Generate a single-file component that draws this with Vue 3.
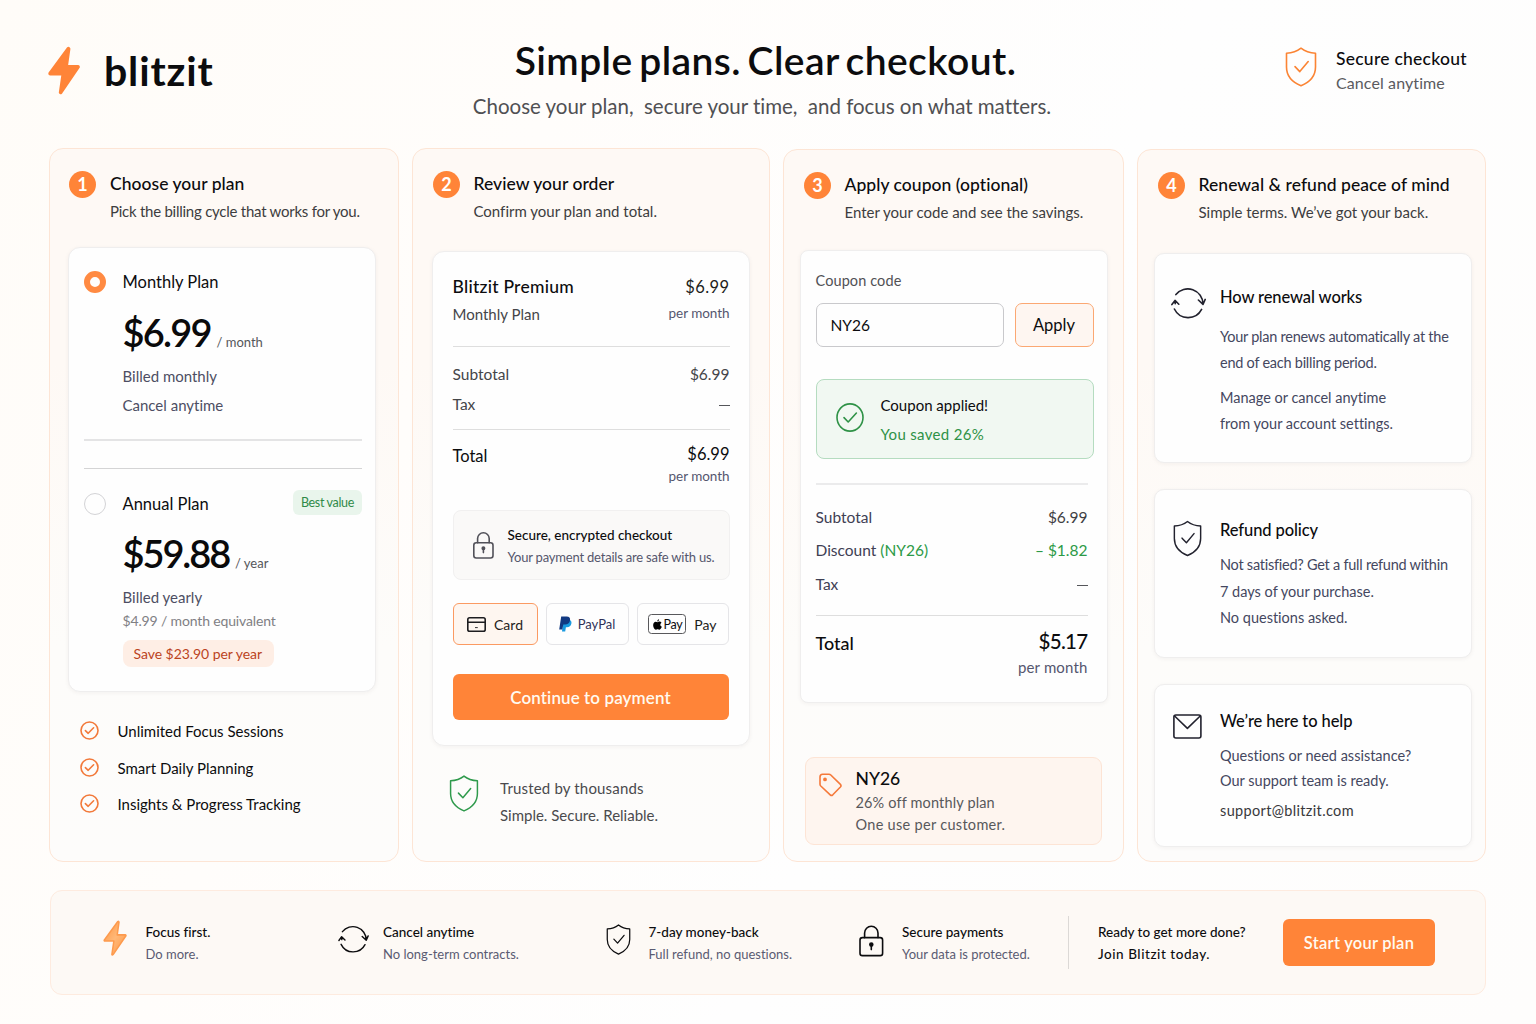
<script setup>

    import { ref, reactive } from 'vue';

    const planSeleccionado = ref('monthly');
    const metodoPago = ref('card');
    const cupon = ref('NY26');

    const beneficios = reactive([
        'Unlimited Focus Sessions',
        'Smart Daily Planning',
        'Insights & Progress Tracking'
    ]);

    // Trazos que se repiten en varios iconos
    const escudo = 'M16 1.2C12.2 4.2 7.2 6 1.5 6.3V20C1.5 29 7.8 35.4 16 38.8C24.2 35.4 30.5 29 30.5 20V6.3C24.8 6 19.8 4.2 16 1.2Z';
    const escudoCheck = 'M10 19.6L14.8 24.6L23.2 14.6';
    const rayo = 'M20.2 2L2.2 26.6Q1.8 27.8 3.2 27.9H15L12.4 45.6Q12.8 47 14 45.8L31 20.8Q31.2 19.8 30.2 19.7H19.4L21.8 2.8Q21.4 1.2 20.2 2Z';
    const flechas = 'M4.9 7.6A15.2 15.2 0 0 1 32 17M27.4 13L32 17.4L34.2 12.4M30.6 22.4A15.2 15.2 0 0 1 3.4 22M0.9 17.6L4 13.4L7.8 17.2M4 13.6L4.2 16.6';

</script>
<template>
    <div class="pagina">
        <header class="cabecera">
            <div class="logo">
                <svg class="logo__rayo" viewBox="0 0 33 49"><path :d="rayo" /></svg>
                <span>blitzit</span>
            </div>
            <div class="titulo">
                <h1>Simple plans. Clear checkout.</h1>
                <p>Choose your plan,&nbsp; secure your time,&nbsp; and focus on what matters.</p>
            </div>
            <div class="seguro">
                <svg class="linea" width="32" height="40" viewBox="0 0 32 40"><path :d="escudo" /><path :d="escudoCheck" /></svg>
                <div>
                    <strong>Secure checkout</strong>
                    <span>Cancel anytime</span>
                </div>
            </div>
        </header>

        <main class="pasos">
            <section class="paso paso--plan">
                <div class="paso__titulo">
                    <b>1</b>
                    <div>
                        <h2>Choose your plan</h2>
                        <p class="ajustado">Pick the billing cycle that works for you.</p>
                    </div>
                </div>
                <div class="tarjeta planes">
                    <div class="plan" @click="planSeleccionado = 'monthly'">
                        <i class="radio" :class="{ activo: planSeleccionado == 'monthly' }"></i>
                        <div>
                            <h3>Monthly Plan</h3>
                            <div class="precio"><strong>$6.99</strong> <span>/ month</span></div>
                            <p>Billed monthly</p>
                            <p class="plan__nota">Cancel anytime</p>
                        </div>
                    </div>
                    <hr class="grueso" />
                    <hr class="segundo" />
                    <div class="plan" @click="planSeleccionado = 'annual'">
                        <i class="radio" :class="{ activo: planSeleccionado == 'annual' }"></i>
                        <div>
                            <div class="plan__fila">
                                <h3>Annual Plan</h3>
                                <span class="mejor">Best value</span>
                            </div>
                            <div class="precio precio--anual"><strong>$59.88</strong> <span>/ year</span></div>
                            <p>Billed yearly</p>
                            <p class="equivalente">$4.99 / month equivalent</p>
                            <span class="ahorro">Save $23.90 per year</span>
                        </div>
                    </div>
                </div>
                <ul class="beneficios">
                    <li v-for="b in beneficios" :key="b">
                        <svg class="linea" width="19" height="19" viewBox="0 0 19 19"><circle cx="9.5" cy="9.5" r="8.5" /><path d="M5.4 9.6L8.2 12.3L13.6 6.8" /></svg>
                        {{ b }}
                    </li>
                </ul>
            </section>

            <section class="paso paso--orden">
                <div class="paso__titulo">
                    <b>2</b>
                    <div>
                        <h2>Review your order</h2>
                        <p>Confirm your plan and total.</p>
                    </div>
                </div>
                <div class="tarjeta orden">
                    <div class="fila fila--producto">
                        <div>
                            <h3>Blitzit Premium</h3>
                            <p>Monthly Plan</p>
                        </div>
                        <div class="derecha">
                            <span class="monto">$6.99</span>
                            <small>per month</small>
                        </div>
                    </div>
                    <hr class="orden__uno" />
                    <div class="fila"><span>Subtotal</span><span>$6.99</span></div>
                    <div class="fila fila--tax"><span>Tax</span><span class="raya"></span></div>
                    <hr class="orden__dos" />
                    <div class="fila fila--total">
                        <span class="total">Total</span>
                        <div class="derecha">
                            <span class="monto">$6.99</span>
                            <small>per month</small>
                        </div>
                    </div>
                    <div class="cifrado">
                        <svg class="linea" width="21" height="27" viewBox="0 0 21 27"><rect x="0.8" y="10.8" width="19.2" height="15.2" rx="2.4" /><path d="M4.6 10.8V6.6A5.8 5.8 0 0 1 16.2 6.6V10.8M10.4 16.4V20.6" /><circle class="relleno" cx="10.4" cy="16.2" r="1.2" /></svg>
                        <div>
                            <strong>Secure, encrypted checkout</strong>
                            <span>Your payment details are safe with us.</span>
                        </div>
                    </div>
                    <div class="metodos">
                        <button class="metodo" :class="{ activo: metodoPago == 'card' }" @click="metodoPago = 'card'">
                            <svg class="linea" width="19" height="15" viewBox="0 0 19 15"><rect x="0.8" y="0.8" width="17.4" height="13.4" rx="1.8" /><path d="M1 5.2H18" /><path class="fino" d="M8.4 10.6H10.4" /></svg>
                            Card
                        </button>
                        <button class="metodo metodo--paypal" :class="{ activo: metodoPago == 'paypal' }" @click="metodoPago = 'paypal'">
                            <svg width="13" height="16" viewBox="0 0 13 16"><path fill="#1a9be0" d="M4.4 4H9.8C12 4 12.8 5.6 12.4 7.6C11.9 10.2 10.2 11.3 8 11.3H6.9L6.2 15.5H3Z" /><path fill="#123a82" d="M2.2 0.4H7.6C10.3 0.4 11.5 1.9 11 4.5C10.5 7.3 8.7 8.5 6.1 8.5H4.3L3.3 13.5H0.2Z" /></svg>
                            PayPal
                        </button>
                        <button class="metodo metodo--apple" :class="{ activo: metodoPago == 'apple' }" @click="metodoPago = 'apple'">
                            <span class="apple">
                                <svg width="9" height="11" viewBox="0 0 18 22"><path d="M12.2 0.5C12.3 2.8 10.6 4.9 8.5 5C8.3 2.8 10.2 0.7 12.2 0.5ZM9 6.3C10 6.3 11.2 5.1 13 5.2C14.7 5.2 16.2 6 17 7.3C13.4 9.4 14 14.2 17.6 15.6C16.8 17.8 15 21.2 12.9 21.3C11.4 21.3 10.9 20.4 9.2 20.4C7.4 20.4 6.9 21.3 5.5 21.3C3 21.3 0.3 16.6 0.3 12.4C0.3 8 2.8 5.5 5.4 5.4C7 5.4 8.2 6.3 9 6.3Z" /></svg>Pay
                            </span>
                            Pay
                        </button>
                    </div>
                    <button class="principal">Continue to payment</button>
                </div>
                <div class="confianza">
                    <svg class="linea" width="30" height="37" viewBox="0 0 32 40"><path :d="escudo" /><path :d="escudoCheck" /></svg>
                    <div>
                        <strong>Trusted by thousands</strong>
                        <span>Simple. Secure. Reliable.</span>
                    </div>
                </div>
            </section>

            <section class="paso paso--cupon">
                <div class="paso__titulo">
                    <b>3</b>
                    <div>
                        <h2>Apply coupon (optional)</h2>
                        <p>Enter your code and see the savings.</p>
                    </div>
                </div>
                <div class="tarjeta cupon">
                    <label>Coupon code</label>
                    <div class="cupon__campo">
                        <input type="text" v-model="cupon" />
                        <button>Apply</button>
                    </div>
                    <div class="aplicado">
                        <svg class="linea" width="28" height="29" viewBox="0 0 28 29"><ellipse cx="14" cy="14.5" rx="13" ry="13.6" /><path d="M8 14.6L12.2 19L20.4 10" /></svg>
                        <div>
                            <strong>Coupon applied!</strong>
                            <span>You saved 26%</span>
                        </div>
                    </div>
                    <hr class="cupon__uno" />
                    <div class="fila"><span>Subtotal</span><span class="gris">$6.99</span></div>
                    <div class="fila"><span>Discount <em>(NY26)</em></span><em>– $1.82</em></div>
                    <div class="fila"><span>Tax</span><span class="raya"></span></div>
                    <hr class="cupon__dos" />
                    <div class="fila fila--final">
                        <span class="total">Total</span>
                        <div class="derecha">
                            <strong>$5.17</strong>
                            <span>per month</span>
                        </div>
                    </div>
                </div>
                <div class="oferta">
                    <svg class="linea" width="23" height="24" viewBox="0 0 23 24"><path d="M1 4Q1 1.4 3.6 1.3L10 1.2Q11 1.2 11.8 2L21.4 11.4Q22.6 12.7 21.4 14L13.8 21.8Q12.5 23 11.2 21.8L1.8 13Q1 12.2 1 11.2Z" /><circle class="relleno" cx="6" cy="6.4" r="1.1" /></svg>
                    <div>
                        <strong>NY26</strong>
                        <span>26% off monthly plan</span>
                        <span>One use per customer.</span>
                    </div>
                </div>
            </section>

            <section class="paso paso--ayuda">
                <div class="paso__titulo">
                    <b>4</b>
                    <div>
                        <h2>Renewal &amp; refund peace of mind</h2>
                        <p>Simple terms. We’ve got your back.</p>
                    </div>
                </div>
                <div class="tarjeta info info--renovar">
                    <svg class="linea" width="35" height="33" viewBox="0 0 35 33"><path :d="flechas" /></svg>
                    <div>
                        <h3>How renewal works</h3>
                        <p class="ajustado">Your plan renews automatically at the<br />end of each billing period.</p>
                        <p>Manage or cancel anytime<br />from your account settings.</p>
                    </div>
                </div>
                <div class="tarjeta info info--reembolso">
                    <svg class="linea" width="29" height="37" viewBox="0 0 32 40"><path :d="escudo" /><path :d="escudoCheck" /></svg>
                    <div>
                        <h3>Refund policy</h3>
                        <p><span class="ajustado">Not satisfied? Get a full refund within</span><br />7 days of your purchase.<br />No questions asked.</p>
                    </div>
                </div>
                <div class="tarjeta info info--soporte">
                    <svg class="linea" width="29" height="25" viewBox="0 0 29 25"><rect x="0.9" y="1" width="27" height="23" rx="2" /><path d="M1.6 2L14.4 14.4L27.2 2" /></svg>
                    <div>
                        <h3>We’re here to help</h3>
                        <p>Questions or need assistance?<br />Our support team is ready.</p>
                        <p class="correo">support@blitzit.com</p>
                    </div>
                </div>
            </section>
        </main>

        <footer class="pie">
            <div class="dato dato--rayo">
                <svg width="26" height="37" viewBox="0 0 33 49">
                    <defs>
                        <linearGradient id="brillo" x1="0" y1="0" x2="1" y2="1">
                            <stop offset="0" stop-color="#ff9440" />
                            <stop offset="0.5" stop-color="#ffb877" />
                            <stop offset="1" stop-color="#ff9440" />
                        </linearGradient>
                    </defs>
                    <path :d="rayo" fill="url(#brillo)" stroke="#fd9a4d" stroke-width="2" stroke-linejoin="round" />
                </svg>
                <div><strong>Focus first.</strong><span>Do more.</span></div>
            </div>
            <div class="dato dato--flechas">
                <svg class="linea" width="31" height="29" viewBox="0 0 35 33"><path :d="flechas" /></svg>
                <div><strong>Cancel anytime</strong><span>No long-term contracts.</span></div>
            </div>
            <div class="dato dato--escudo">
                <svg class="linea" width="25" height="31" viewBox="0 0 32 40"><path :d="escudo" /><path :d="escudoCheck" /></svg>
                <div><strong>7-day money-back</strong><span>Full refund, no questions.</span></div>
            </div>
            <div class="dato dato--candado">
                <svg class="linea" width="25" height="32" viewBox="0 0 25 32"><rect x="1" y="12.6" width="22.6" height="18" rx="2.4" /><path d="M5.6 12.6V8A6.7 6.7 0 0 1 19 8V12.6M12.3 20V24.6" /><circle class="relleno" cx="12.3" cy="19.6" r="1.5" /></svg>
                <div><strong>Secure payments</strong><span>Your data is protected.</span></div>
            </div>
            <div class="dato dato--cierre">
                <div><strong>Ready to get more done?</strong><strong>Join Blitzit today.</strong></div>
            </div>
            <button class="principal">Start your plan</button>
        </footer>
    </div>
</template>
<style>
    body{
        margin: 0;
        background-color: #fffdfb;
    }
</style>
<style scoped>
    *{
        box-sizing: border-box;
    }
    .pagina{
        width: 1536px;
        height: 1024px;
        overflow: hidden;
        font-family: Lato, "Open Sans", sans-serif;
        font-size: 15px;
        font-variant-ligatures: none;
        line-height: 20px;
        color: #0c0c0e;
        background: linear-gradient(115deg, #fffcf8 0%, #fffdfb 30%, #fefefe 60%, #fefdfc 100%);
    }
    h1, h2, h3, p, ul{
        margin: 0;
        padding: 0;
        font-weight: 500;
    }
    p{
        font-weight: 400;
    }
    strong, span, small{
        white-space: nowrap;
    }
    em{
        font-style: normal;
        color: #2c9a47;
    }
    button, input{
        margin: 0;
        padding: 0;
        font-family: inherit;
        color: inherit;
    }
    hr{
        width: 100%;
        height: 1px;
        border: 0;
        margin: 0;
        background-color: #dedede;
    }
    svg{
        display: block;
        flex: none;
    }
    .linea{
        fill: none;
        stroke: currentColor;
        stroke-width: 1.6;
        stroke-linecap: round;
        stroke-linejoin: round;
    }
    .relleno{
        fill: currentColor;
    }
    .fino{
        stroke-width: 0.9;
    }

    /* Cabecera */
    .cabecera{
        display: grid;
        grid-template-columns: 382px 1fr 252px;
        height: 148px;
        padding-left: 47px;
    }
    .logo{
        display: flex;
        gap: 23px;
        padding-top: 46px;
        font-size: 41px;
        font-weight: 700;
        line-height: 50px;
        letter-spacing: 0.85px;
    }
    .logo__rayo{
        width: 34px;
        height: 50px;
        fill: #ff8438;
        stroke: #ff8438;
        stroke-width: 2;
        stroke-linejoin: round;
    }
    .titulo{
        display: flex;
        flex-direction: column;
        align-items: center;
        padding-right: 186px;
    }
    .titulo h1, .titulo p{
        white-space: nowrap;
    }
    .titulo h1{
        padding: 36px 0 0 4px;
        font-size: 39px;
        font-weight: 600;
        line-height: 48px;
        letter-spacing: 0.42px;
        word-spacing: -3.5px;
    }
    .titulo p{
        padding: 9px 3px 0 0;
        font-size: 20.5px;
        line-height: 26px;
        letter-spacing: -0.02px;
        color: #505053;
    }
    .seguro{
        display: flex;
        gap: 19px;
        padding-top: 47px;
        color: #fb8434;
        margin-left: 1px;
    }
    .seguro div{
        display: flex;
        flex-direction: column;
        padding-top: 1px;
    }
    .seguro strong{
        font-size: 17.5px;
        font-weight: 500;
        line-height: 22px;
        letter-spacing: 0.25px;
        color: #0c0c0e;
    }
    .seguro span{
        margin-top: 3px;
        font-size: 16px;
        letter-spacing: 0.1px;
        color: #5a5a5e;
    }

    /* Pasos */
    .pasos{
        display: grid;
        grid-template-columns: 350px 358px 341px 349px;
        gap: 13px;
        height: 714px;
        margin-left: 49px;
    }
    .paso{
        border: solid 1px #fde5d5;
        border-radius: 14px;
        background: linear-gradient(180deg, #fef9f5 0%, #fef9f5 30%, #fdfcfa 70%, #fdfcfb 100%);
    }
    .paso--cupon, .paso--ayuda{
        margin-top: 1px;
    }
    .paso__titulo{
        display: flex;
        gap: 14px;
        height: 73px;
        padding: 22px 0 0 20px;
    }
    .paso--plan .paso__titulo{
        padding-left: 19px;
    }
    .paso--orden .paso__titulo, .paso--cupon .paso__titulo, .paso--ayuda .paso__titulo{
        gap: 13.5px;
    }
    .paso__titulo b{
        width: 27px;
        height: 27px;
        border-radius: 50%;
        background-color: #ff8438;
        color: #fff;
        font-size: 18px;
        font-weight: 700;
        line-height: 27px;
        text-align: center;
    }
    .paso__titulo h2{
        font-size: 17.5px;
        line-height: 26px;
        letter-spacing: 0.04px;
        white-space: nowrap;
    }
    .paso__titulo p{
        margin-top: 4px;
        color: #3d3d40;
        white-space: nowrap;
    }
    .paso__titulo .ajustado{
        letter-spacing: -0.25px;
    }
    .tarjeta{
        border: solid 1px #efeeee;
        border-radius: 12px;
        background-color: #fefefe;
        box-shadow: 0 1px 4px rgba(60, 40, 30, 0.05);
    }

    /* Paso 1 */
    .planes{
        width: 308px;
        height: 445px;
        margin: 25px 0 0 18px;
        padding: 22px 13px 0 15px;
    }
    .plan{
        display: grid;
        grid-template-columns: 38.5px 1fr;
        color: #4d4e63;
    }
    .plan h3{
        font-size: 16.5px;
        font-weight: 400;
        line-height: 24px;
        color: #0c0c0e;
    }
    .radio{
        width: 22px;
        height: 22px;
        margin-top: 1px;
        border: solid 1.5px #d3d3d6;
        border-radius: 50%;
    }
    .radio.activo{
        border: solid 6px #ff8a42;
    }
    .precio{
        height: 44px;
        margin-top: 16px;
        line-height: 44px;
        white-space: nowrap;
    }
    .precio strong{
        font-size: 38px;
        font-weight: 600;
        letter-spacing: -1.8px;
        color: #0a0a0b;
    }
    .precio span{
        margin-left: 2px;
        font-size: 13px;
        color: #55565a;
    }
    .precio--anual{
        margin-top: 15px;
    }
    .precio--anual strong{
        letter-spacing: -2.1px;
    }
    .plan p{
        margin-top: 12px;
    }
    .plan .plan__nota{
        margin-top: 9px;
    }
    .planes .grueso{
        height: 2px;
        margin-top: 24px;
        background-color: #e4e4e5;
    }
    .planes .segundo{
        margin: 27px 0 23px;
        background-color: #d4d4d5;
    }
    .plan__fila{
        display: flex;
        justify-content: space-between;
    }
    .mejor{
        height: 25px;
        margin: -2px 0 -1px;
        padding: 0 8px;
        border-radius: 6px;
        background-color: #e9f5ec;
        font-size: 12.5px;
        line-height: 25px;
        letter-spacing: -0.33px;
        color: #2f8a48;
    }
    .plan .equivalente{
        margin-top: 4px;
        font-size: 14px;
        letter-spacing: -0.15px;
        color: #808084;
    }
    .ahorro{
        display: block;
        width: 151px;
        height: 27px;
        margin-top: 9px;
        padding: 0 11px;
        border-radius: 8px;
        background-color: #feeee5;
        font-size: 14px;
        line-height: 27px;
        letter-spacing: -0.05px;
        color: #bb431d;
    }
    .beneficios{
        display: flex;
        flex-direction: column;
        gap: 16.5px;
        margin: 29px 0 0 30px;
        list-style: none;
    }
    .beneficios li{
        display: flex;
        gap: 18.5px;
        font-weight: 400;
    }
    .beneficios svg{
        color: #f2793a;
    }

    /* Paso 2 */
    .orden{
        width: 318px;
        height: 495px;
        margin: 29px 0 0 19px;
        padding: 23px 19.5px 0;
    }
    .fila{
        display: flex;
        justify-content: space-between;
        font-size: 15.5px;
        color: #444549;
    }
    .derecha{
        display: flex;
        flex-direction: column;
        align-items: flex-end;
    }
    .fila small{
        font-size: 13.5px;
        letter-spacing: -0.05px;
        color: #55566e;
    }
    .monto{
        font-size: 16.5px;
        letter-spacing: 0.4px;
        color: #1d1d20;
    }
    .fila--producto h3{
        font-size: 17.5px;
        line-height: 24px;
        letter-spacing: 0.25px;
        color: #0c0c0e;
    }
    .fila--producto .monto{
        line-height: 24px;
    }
    .fila--producto p{
        margin-top: 5px;
        font-size: 15px;
    }
    .fila--producto small{
        margin-top: 4px;
    }
    .orden__uno{
        margin: 22px 0 17px;
    }
    .raya{
        width: 11px;
        height: 1px;
        margin-top: 11px;
        background-color: #55565a;
    }
    .fila--tax{
        margin-top: 10px;
    }
    .orden__dos{
        margin-top: 15px;
    }
    .total{
        color: #0c0c0e;
    }
    .fila--total{
        margin-top: 14px;
    }
    .fila--total .total{
        font-size: 16.5px;
        line-height: 24px;
    }
    .fila--total .monto{
        letter-spacing: 0;
        color: #0c0c0e;
    }
    .fila--total small{
        margin-top: 2px;
    }
    .cifrado{
        display: flex;
        gap: 14px;
        width: 277px;
        height: 70px;
        margin-top: 24px;
        padding: 14px 0 0 19px;
        border: solid 1px #f1f0f0;
        border-radius: 8px;
        background-color: #faf9f8;
        color: #515159;
    }
    .cifrado svg{
        margin-top: 7px;
    }
    .cifrado div{
        display: flex;
        flex-direction: column;
    }
    .cifrado strong{
        font-size: 13.5px;
        font-weight: 500;
        color: #0c0c0e;
    }
    .cifrado span{
        margin-top: 2px;
        font-size: 13px;
        letter-spacing: -0.2px;
        color: #55566c;
    }
    .metodos{
        display: grid;
        grid-template-columns: 85px 83px 92px;
        gap: 8px;
        margin-top: 23px;
    }
    .metodo{
        display: flex;
        align-items: center;
        justify-content: center;
        gap: 8px;
        height: 42px;
        border: solid 1px #e5e5e8;
        border-radius: 6px;
        background-color: #fefefe;
        font-size: 14px;
        color: #1d1d20;
    }
    .metodo.activo{
        border-color: #fb9a62;
        background-color: #fef6f0;
    }
    .metodo--paypal{
        gap: 6px;
        font-size: 13px;
        color: #2f3158;
    }
    .apple{
        display: flex;
        align-items: center;
        gap: 1px;
        height: 20px;
        padding: 0 3px 0 4px;
        border: solid 1px #58585b;
        border-radius: 3.5px;
        font-size: 12.5px;
        letter-spacing: -0.3px;
        color: #0c0c0e;
    }
    .principal{
        border: 0;
        border-radius: 6px;
        background-color: #ff8438;
        color: #fffaf0;
        font-size: 17px;
        font-weight: 600;
    }
    .orden .principal{
        width: 276px;
        height: 46px;
        margin-top: 29px;
        letter-spacing: 0.1px;
    }
    .confianza{
        display: flex;
        gap: 21px;
        margin: 29px 0 0 36px;
        color: #2f9a4c;
    }
    .confianza div{
        display: flex;
        flex-direction: column;
        gap: 7px;
        padding-top: 3px;
        color: #4a4a4d;
    }
    .confianza strong{
        font-weight: 400;
        letter-spacing: 0.17px;
    }

    /* Paso 3 */
    .cupon{
        width: 308px;
        height: 453px;
        margin: 27px 0 0 15.5px;
        padding: 20px 13px 0 15px;
        border-radius: 8px;
    }
    .cupon label{
        display: block;
        font-size: 14.5px;
        letter-spacing: 0.1px;
        color: #515155;
    }
    .cupon__campo{
        display: grid;
        grid-template-columns: 188px 79px;
        gap: 11px;
        margin-top: 12px;
    }
    .cupon__campo input{
        height: 44px;
        padding-left: 14px;
        border: solid 1px #c9c9cc;
        border-radius: 7px;
        background-color: #fefefe;
        font-size: 15.5px;
        outline: none;
    }
    .cupon__campo button{
        height: 44px;
        border: solid 1px #fba873;
        border-radius: 7px;
        background-color: #fef6f1;
        font-size: 16.5px;
    }
    .aplicado{
        display: flex;
        gap: 17px;
        width: 278px;
        height: 80px;
        margin-top: 32px;
        padding: 15px 0 0 19px;
        border: solid 1px #b5dcc0;
        border-radius: 8px;
        background-color: #f1f8f2;
        color: #2f9247;
    }
    .aplicado svg{
        margin-top: 8px;
    }
    .aplicado div{
        display: flex;
        flex-direction: column;
        gap: 8.5px;
    }
    .aplicado strong{
        font-weight: 400;
        color: #0c0c0e;
    }
    .aplicado span{
        letter-spacing: 0.33px;
    }
    .cupon hr{
        width: 272px;
    }
    .cupon .cupon__uno{
        height: 2px;
        margin-top: 24px;
        background-color: #ebebec;
    }
    .cupon .fila{
        margin: 13.5px 6px 0 0;
        color: #3f4054;
    }
    .cupon .cupon__uno + .fila{
        margin-top: 21.5px;
    }
    .cupon .gris{
        color: #3f3f43;
    }
    .cupon .cupon__dos{
        margin-top: 21px;
    }
    .cupon .fila--final{
        margin-top: 13px;
    }
    .fila--final .total{
        padding-top: 2px;
        font-size: 18px;
        font-weight: 500;
        line-height: 24px;
        color: #0c0c0e;
    }
    .fila--final strong{
        font-size: 20.5px;
        font-weight: 500;
        line-height: 24px;
        letter-spacing: -0.7px;
        color: #0c0c0e;
    }
    .fila--final .derecha span{
        margin-top: 4px;
        font-size: 15px;
        letter-spacing: 0.15px;
        color: #55566e;
    }
    .oferta{
        display: flex;
        gap: 14px;
        width: 297px;
        height: 88px;
        margin: 54px 0 0 20.5px;
        padding: 9px 0 0 13px;
        border: solid 1px #fde4d5;
        border-radius: 9px;
        background-color: #fef5ef;
        color: #f5793a;
    }
    .oferta svg{
        margin-top: 6px;
    }
    .oferta div{
        display: flex;
        flex-direction: column;
    }
    .oferta strong{
        font-size: 17.5px;
        font-weight: 500;
        line-height: 24px;
        color: #0c0c0e;
    }
    .oferta span{
        margin-top: 2px;
        font-size: 14.5px;
        letter-spacing: 0.15px;
        color: #58585b;
    }
    .oferta span:last-child{
        letter-spacing: 0.3px;
    }

    /* Paso 4 */
    .info{
        display: grid;
        grid-template-columns: 49.5px 1fr;
        width: 318px;
        margin: 26px 0 0 15.5px;
        padding-left: 16px;
        color: #444760;
        border-radius: 10px;
    }
    .info svg{
        color: #22222e;
    }
    .info h3{
        font-size: 16.5px;
        line-height: 24px;
        letter-spacing: -0.1px;
        color: #0c0c0e;
    }
    .info p{
        font-size: 14.5px;
        white-space: nowrap;
    }
    .info .ajustado{
        letter-spacing: -0.25px;
    }
    .info--renovar{
        height: 210px;
        margin-top: 30px;
        padding-top: 31px;
    }
    .info--renovar svg{
        margin-top: 2px;
    }
    .info--renovar p{
        margin-top: 15px;
        line-height: 26px;
    }
    .info--renovar p + p{
        margin-top: 9px;
    }
    .info--reembolso{
        height: 169px;
        padding-top: 28px;
    }
    .info--reembolso svg{
        margin: 2px 0 0 2px;
    }
    .info--reembolso p{
        margin-top: 10px;
        line-height: 26.5px;
    }
    .info--soporte{
        height: 163px;
        padding-top: 24px;
    }
    .info--soporte svg{
        margin: 5px 0 0 2px;
    }
    .info--soporte p{
        margin-top: 11px;
        line-height: 24.5px;
    }
    .info--soporte .correo{
        margin-top: 6px;
        letter-spacing: 0.35px;
        color: #39393c;
    }

    /* Pie */
    .pie{
        display: grid;
        grid-template-columns: 236px 268px 253px 209px 215px 152px;
        width: 1436px;
        height: 105px;
        margin: 28px 0 0 50px;
        padding: 28px 0 0 51px;
        border: solid 1px #feebdf;
        border-radius: 12px;
        background-color: #fdf9f5;
    }
    .dato{
        display: flex;
    }
    .dato div{
        display: flex;
        flex-direction: column;
        gap: 2.5px;
        padding-top: 2.5px;
    }
    .dato strong{
        font-size: 13.5px;
        font-weight: 500;
    }
    .dato span{
        font-size: 13px;
        color: #5a5b72;
    }
    .dato--rayo{
        gap: 17.5px;
    }
    .dato--rayo svg{
        margin-top: 1px;
    }
    .dato--flechas{
        gap: 14px;
    }
    .dato--flechas svg{
        margin-top: 6px;
    }
    .dato--escudo{
        gap: 17.5px;
    }
    .dato--escudo svg{
        margin-top: 5px;
    }
    .dato--candado{
        gap: 18px;
    }
    .dato--candado svg{
        margin-top: 6px;
    }
    .dato--cierre{
        height: 53px;
        margin-top: -3px;
        padding: 3px 0 0 29px;
        border-left: solid 1px #dcd9d6;
    }
    .dato--cierre strong + strong{
        letter-spacing: 0.55px;
    }
    .pie .principal{
        height: 47px;
        font-size: 16.5px;
        letter-spacing: 0.25px;
    }
</style>
